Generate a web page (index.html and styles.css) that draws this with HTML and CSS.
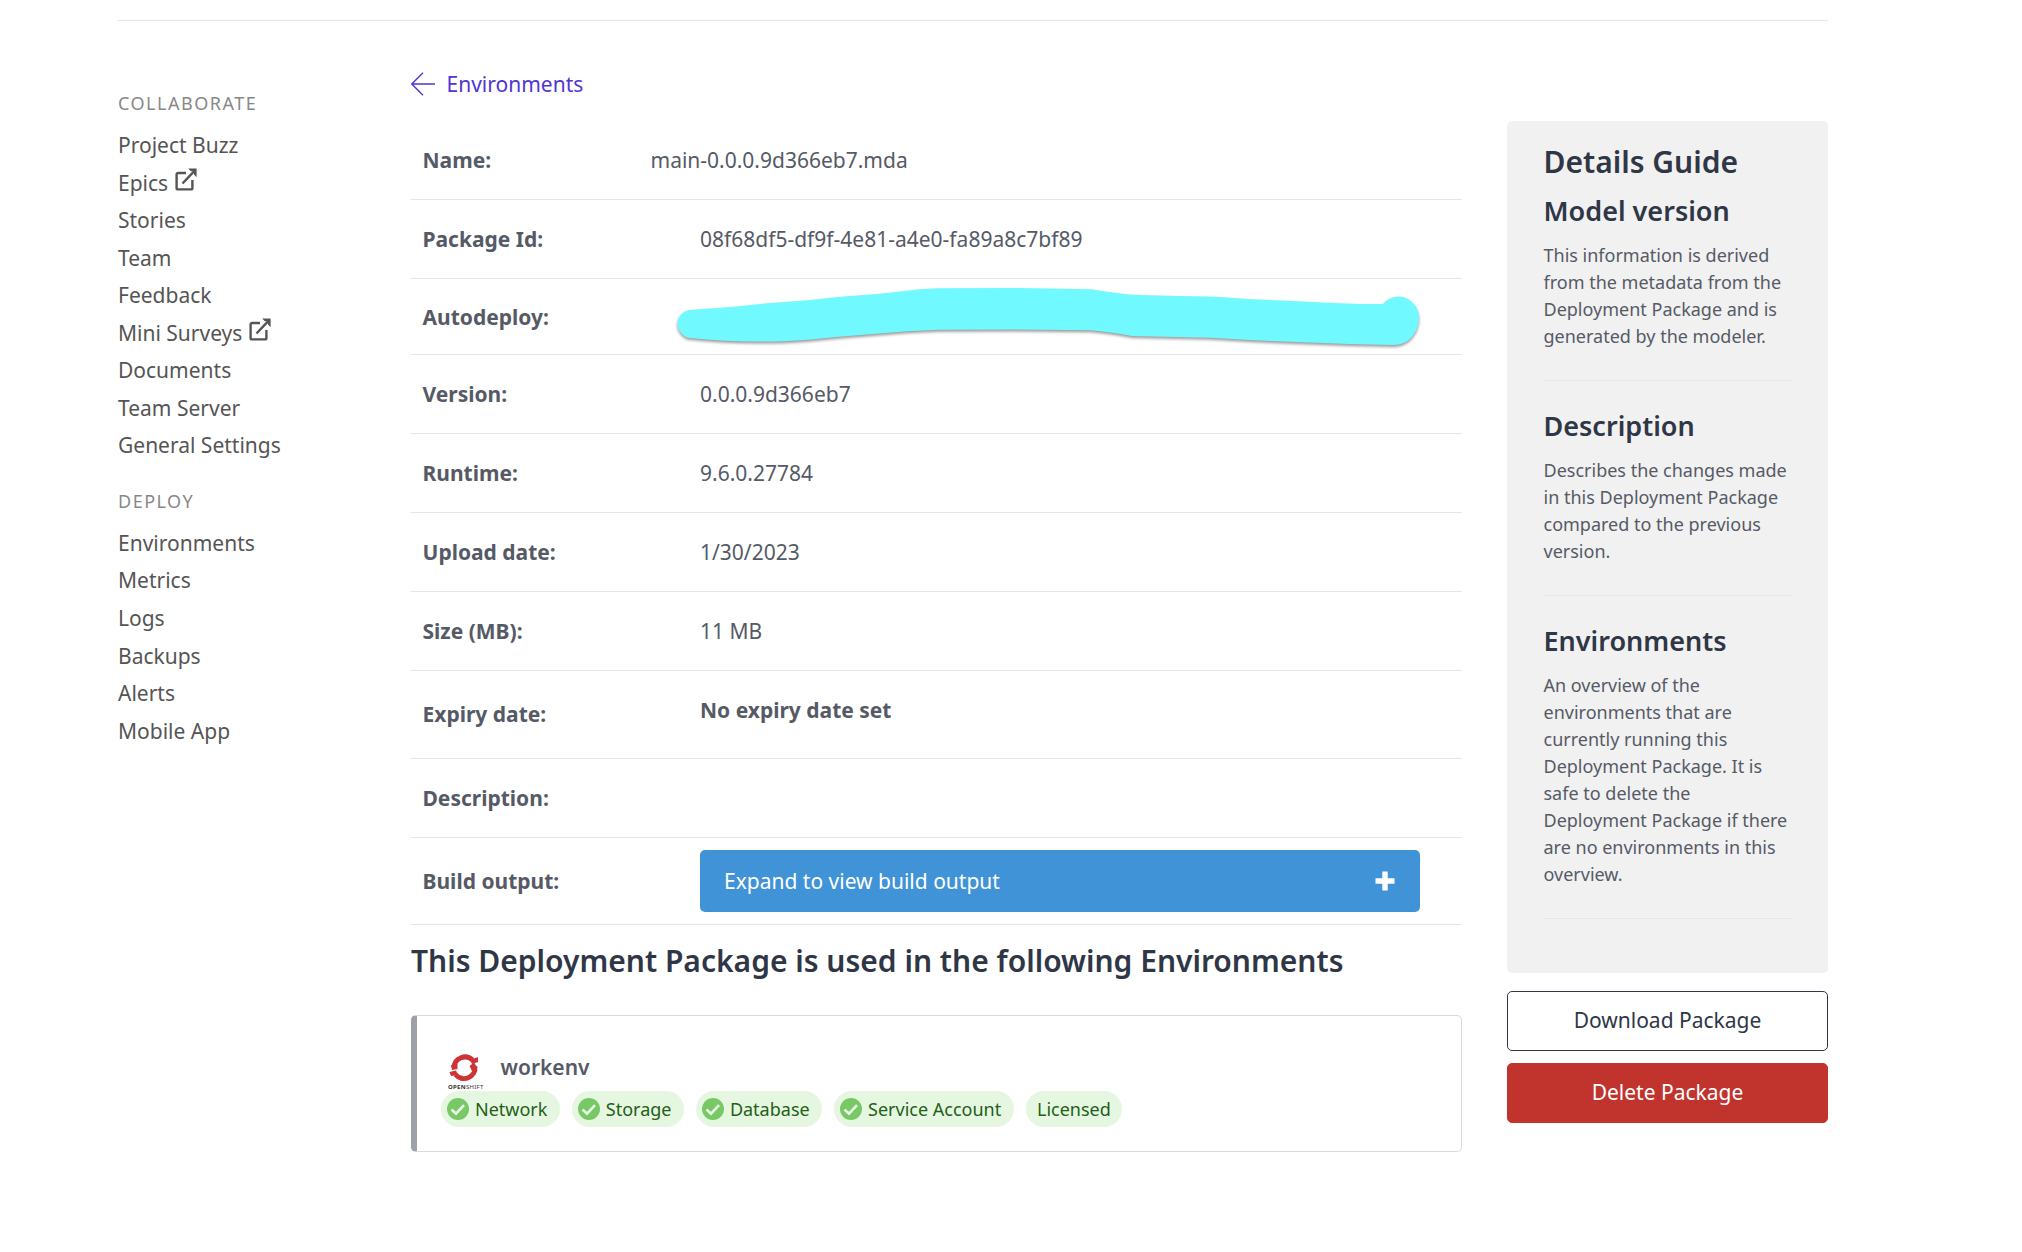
FILE: index.html
```html
<!DOCTYPE html>
<html lang="en">
<head>
<meta charset="utf-8">
<title>Package Details</title>
<link rel="stylesheet" href="styles.css">
</head>
<body>
<svg width="0" height="0" class="defs" aria-hidden="true">
  <symbol id="external" viewBox="0 0 22 23">
    <path d="M11 5H3.2Q1.6 5 1.6 6.6V20Q1.6 21.4 3.2 21.4H16Q17.4 21.4 17.4 20V12" fill="none" stroke="currentColor" stroke-width="2.4"/>
    <path d="M7.5 15.5L19 3.4" fill="none" stroke="currentColor" stroke-width="2.4"/>
    <path d="M13.2 .6H21.6V9.2L19 6.6V3.2H15.8Z" fill="currentColor"/>
  </symbol>
  <symbol id="check" viewBox="0 0 22 22">
    <circle cx="11" cy="11" r="11" fill="#78c866"/>
    <path d="M4.5 11.5L9 15.7L17 7.2" fill="none" stroke="#e9f8e5" stroke-width="2.6"/>
  </symbol>
</svg>
<div class="page">
  <nav class="sidebar">
    <h4>COLLABORATE</h4>
    <ul>
      <li>Project Buzz</li>
      <li>Epics<svg class="ext"><use href="#external"/></svg></li>
      <li>Stories</li>
      <li>Team</li>
      <li>Feedback</li>
      <li>Mini Surveys<svg class="ext"><use href="#external"/></svg></li>
      <li>Documents</li>
      <li>Team Server</li>
      <li>General Settings</li>
    </ul>
    <h4>DEPLOY</h4>
    <ul>
      <li>Environments</li>
      <li>Metrics</li>
      <li>Logs</li>
      <li>Backups</li>
      <li>Alerts</li>
      <li>Mobile App</li>
    </ul>
  </nav>
  <main class="main">
    <a class="back"><svg width="24" height="24" viewBox="0 0 24 24"><path d="M24 12H1M12 .7L.8 12L12 23.3" fill="none" stroke="currentColor" stroke-width="1.4"/></svg>Environments</a>
    <dl class="details">
      <div class="row name"><dt>Name:</dt><dd>main-0.0.0.9d366eb7.mda</dd></div>
      <div class="row"><dt>Package Id:</dt><dd>08f68df5-df9f-4e81-a4e0-fa89a8c7bf89</dd></div>
      <div class="row auto"><dt>Autodeploy:</dt><dd>
        <svg class="marker" viewBox="670 280 760 75"><path d="M688 309.3C710 307 725 307 744 304.7L767 302.3L808 299.3L838 296L877 293L905 290Q925 287.5 941 287.3L1017 287L1091 288.3L1114 291.7Q1130 294 1145 294.3L1216 295.7L1252 298.3L1287 299.7L1328 301.7L1359 303L1383 303A20.5 21.5 0 0 1 1419 317Q1419 328 1411 337Q1404 344 1394 344L1349 343L1254 339.3L1211 336.7L1132 335Q1110 331 1091 329.3L1017 328.5L938 328.7L907 330.3L838.6 335.7L808 338.7Q785 340.6 757 340.6Q720 340 688 336.7C674 331 674 314 688 309.3Z" fill="#70faff"/></svg>
      </dd></div>
      <div class="row"><dt>Version:</dt><dd>0.0.0.9d366eb7</dd></div>
      <div class="row"><dt>Runtime:</dt><dd>9.6.0.27784</dd></div>
      <div class="row"><dt>Upload date:</dt><dd>1/30/2023</dd></div>
      <div class="row"><dt>Size (MB):</dt><dd>11 MB</dd></div>
      <div class="row expiry"><dt>Expiry date:</dt><dd>No expiry date set</dd></div>
      <div class="row"><dt>Description:</dt><dd></dd></div>
      <div class="row build"><dt>Build output:</dt><dd>
        <button class="expand">Expand to view build output<svg width="20" height="20" viewBox="0 0 20 20"><path d="M10 .5V19.5M.5 10H19.5" stroke="#fff" stroke-width="5.4"/></svg></button>
      </dd></div>
    </dl>
    <h2 class="used">This Deployment Package is used in the following Environments</h2>
    <section class="card">
      <div class="env">
        <span class="logo">
          <svg width="32" height="30" viewBox="0 0 32 30"><g fill="none" stroke="#cd3437" stroke-width="5"><path d="M6 14A11 11 0 0 1 24.5 7"/><path d="M27 13.5A11 11 0 0 1 7.5 21.5"/></g><path fill="#cd3437" d="M3 12L9.5 11V16L4 17ZM22 7L30 4V9L24 11ZM21.5 13L26 9.5L29 14L24 18ZM1.5 19L8 17.5L10 22L3 23Z"/></svg>
          <span class="logo-text"><b>OPEN</b>SHIFT</span>
        </span>
        <strong>workenv</strong>
      </div>
      <div class="chips">
        <span class="chip"><svg><use href="#check"/></svg>Network</span>
        <span class="chip"><svg><use href="#check"/></svg>Storage</span>
        <span class="chip"><svg><use href="#check"/></svg>Database</span>
        <span class="chip"><svg><use href="#check"/></svg>Service Account</span>
        <span class="chip plain">Licensed</span>
      </div>
    </section>
  </main>
  <aside class="aside">
    <div class="guide">
      <h2>Details Guide</h2>
      <section><h3>Model version</h3><p>This information is derived from the metadata from the Deployment Package and is generated by the modeler.</p></section>
      <section><h3>Description</h3><p>Describes the changes made in this Deployment Package compared to the previous version.</p></section>
      <section><h3>Environments</h3><p>An overview of the environments that are currently running this Deployment Package. It is safe to delete the Deployment Package if there are no environments in this overview.</p></section>
    </div>
    <button class="btn">Download Package</button>
    <button class="btn danger">Delete Package</button>
  </aside>
</div>
</body>
</html>
```
FILE: styles.css
```css
* { box-sizing: border-box; }
body {
  margin: 0;
  background: #fff;
  color: #555a66;
  font: 21px/32px "Noto Sans", sans-serif;
}
h2, h3, h4, p, ul, dl, dd { margin: 0; padding: 0; }
.defs { position: absolute; }
.page {
  width: 1710px;
  height: 1232px;
  margin: 20px 0 0 118px;
  border-top: 1px solid #e6e6e6;
  display: grid;
  grid-template-columns: 293px 1051px 366px;
  align-items: start;
}
.sidebar { padding-top: 70px; color: #555; }
.sidebar h4 {
  font-size: 18px;
  line-height: 24px;
  font-weight: 400;
  letter-spacing: 1.5px;
  color: #888;
  margin-bottom: 12px;
}
.sidebar ul { list-style: none; margin-bottom: 24px; }
.sidebar li { height: 37.55px; line-height: 37.55px; white-space: nowrap; }
.ext { width: 22px; height: 23px; margin-left: 7px; }

.main { padding-top: 46px; }
.back {
  display: flex;
  align-items: center;
  gap: 11.5px;
  height: 34px;
  color: #5235d5;
}
.details { margin-top: 20px; }
.row {
  display: flex;
  align-items: center;
  height: 79px;
  padding-left: 11.5px;
  border-bottom: 1px solid #e6e6e6;
}
.row dt { width: 277.5px; font-weight: 700; }
.row.name dt { width: 228px; }
.row.auto { height: 76px; }
.row.auto dd { position: relative; height: 32px; }
.marker {
  position: absolute;
  left: -30px;
  top: -20px;
  width: 760px;
  height: 75px;
  overflow: visible;
  filter: drop-shadow(0 2px 1.5px rgba(0, 0, 0, .4));
}
.row.expiry { height: 88px; padding-bottom: 1px; }
.expiry dd { font-weight: 700; padding-bottom: 8px; }
.row.build { height: 87px; }
.expand {
  display: flex;
  align-items: center;
  justify-content: space-between;
  width: 720px;
  height: 62px;
  padding: 0 25px 0 24px;
  border: 0;
  border-radius: 5px;
  background: #4093d6;
  color: #fff;
  font: inherit;
}
.used {
  margin-top: 16px;
  font-size: 30px;
  line-height: 40px;
  font-weight: 600;
  color: #2f3646;
  white-space: nowrap;
}
.card {
  height: 137px;
  margin-top: 34px;
  padding: 34px 0 0 24px;
  border: 1px solid #d9dadc;
  border-left: 6px solid #9ea1a8;
  border-radius: 5px;
}
.env { display: flex; height: 41px; }
.logo { width: 59.5px; padding: 3px 0 0 7px; display: flex; flex-direction: column; }
.logo-text { font-size: 6px; line-height: 8px; letter-spacing: .3px; color: #333; }
.env strong { line-height: 34px; font-weight: 600; }
.chips { display: flex; gap: 12px; }
.chip {
  display: flex;
  align-items: center;
  gap: 6px;
  height: 36px;
  padding: 0 12.4px 1px 6px;
  border-radius: 18px;
  background: #e5f7e1;
  color: #235f17;
  font-size: 18px;
}
.chip svg { width: 22px; height: 22px; }
.chip.plain { padding: 0 11.4px; }

.aside { padding: 100px 0 0 45px; }
.guide {
  height: 852px;
  padding: 21px 36px 0;
  border-radius: 5px;
  background: #f1f1f1;
  margin-bottom: 18px;
}
.guide h2 { font-size: 30px; line-height: 40px; font-weight: 600; color: #2f3646; margin-bottom: 11px; }
.guide h3 { font-size: 27px; line-height: 36px; font-weight: 600; color: #2f3646; margin-bottom: 13px; }
.guide p { font-size: 18px; line-height: 27px; }
.guide h2, .guide h3, .guide p { padding-left: .5px; }
.guide section { padding-bottom: 30px; border-bottom: 1px solid #e6e6e6; }
.guide section + section { padding-top: 27px; }
.btn {
  display: block;
  width: 321px;
  height: 60px;
  margin-bottom: 12px;
  padding: 0 0 2px;
  border: 1px solid #2f3646;
  border-radius: 5px;
  background: #fff;
  color: #2f3646;
  font: inherit;
}
.btn.danger { background: #c1332d; border-color: #c1332d; color: #fff; }
```
